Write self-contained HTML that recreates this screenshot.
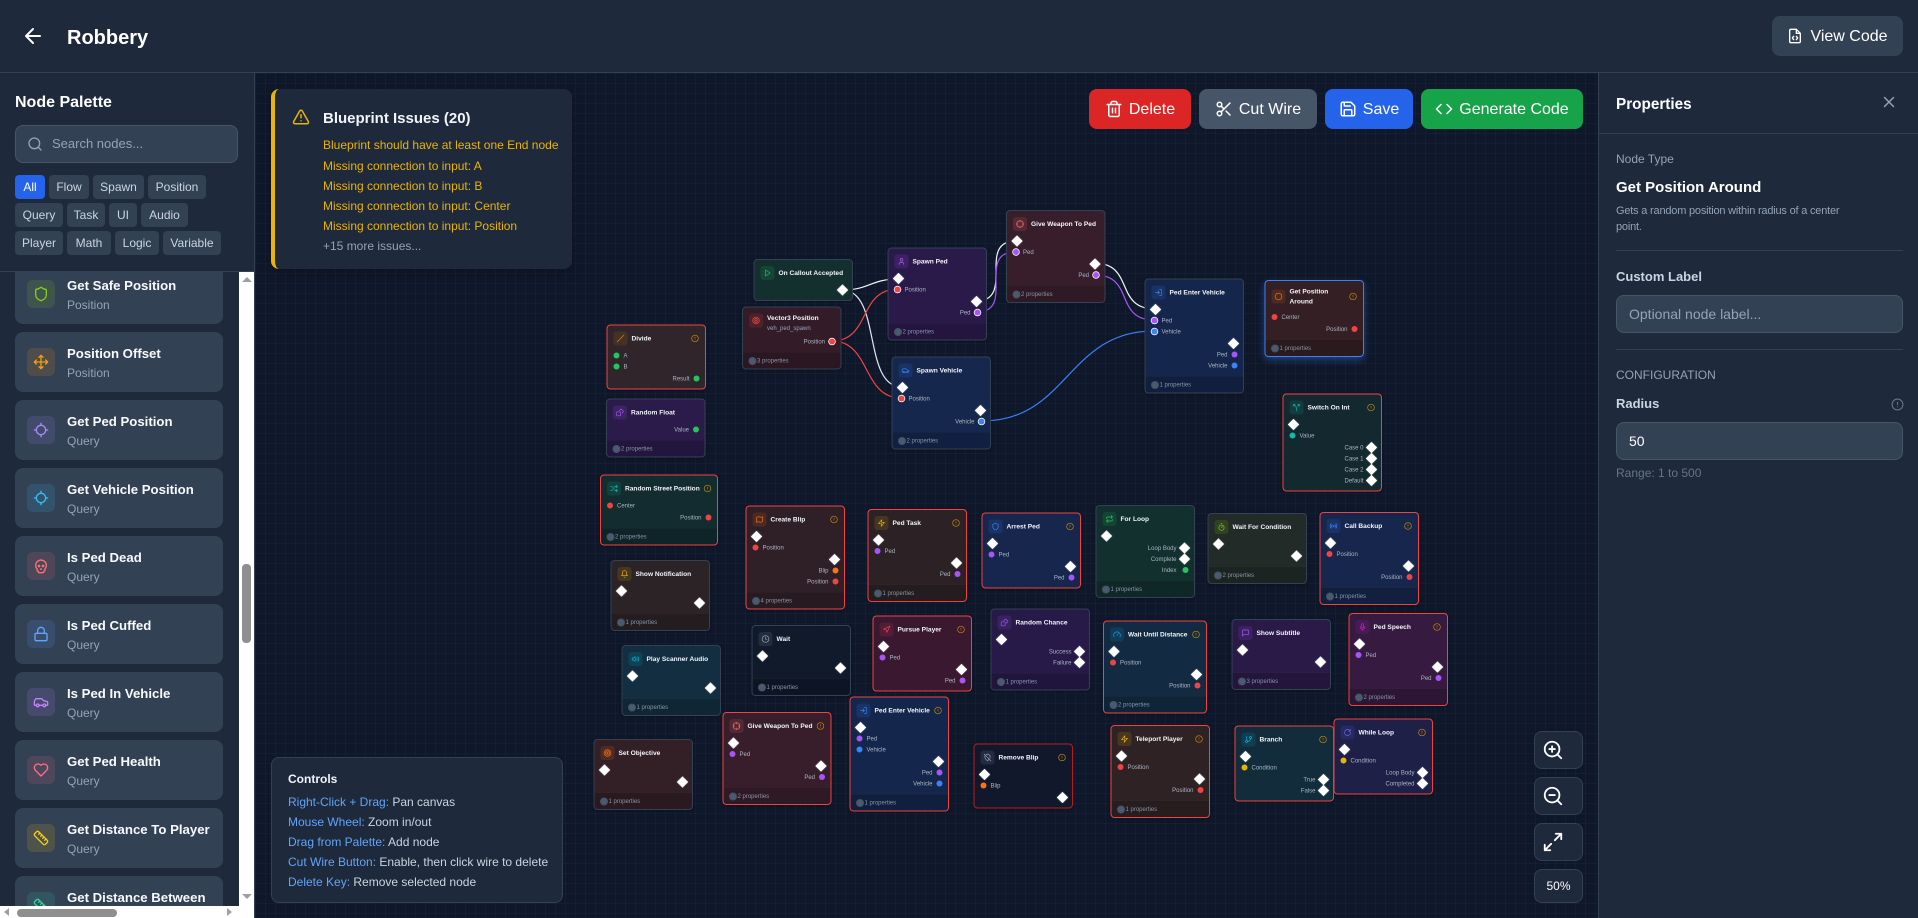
<!DOCTYPE html>
<html lang="en"><head><meta charset="utf-8"><title>Robbery</title>
<style>
*{box-sizing:border-box}
html,body{margin:0;padding:0;width:1918px;height:918px;overflow:hidden;background:#0f172a;font-family:"Liberation Sans",sans-serif;color:#fff}
p{margin:0}
svg.defs{position:absolute;width:0;height:0}
.ab{position:absolute}
svg.i{fill:none;stroke:currentColor;stroke-width:2;stroke-linecap:round;stroke-linejoin:round;display:block}
#hdr{left:0;top:0;width:1918px;height:73px;background:#1e293b;border-bottom:1px solid #334155}
#canvas{left:255px;top:73px;width:1344px;height:845px;background-color:#0f172a;background-image:linear-gradient(rgba(51,65,85,.15) 1px,transparent 1px),linear-gradient(90deg,rgba(51,65,85,.15) 1px,transparent 1px);background-size:10px 10px}
#wires{left:0;top:0}
#layer{left:0;top:0;width:3836px;height:1836px;transform:scale(.5);transform-origin:0 0}
.n{position:absolute;width:199px;border:2px solid #334155;border-radius:8px;background:var(--c);font-size:12px;color:#aab4c3;box-shadow:0 2px 6px rgba(0,0,0,.25)}
.n.e{border-color:#ef4444}
.n.nf{padding-bottom:9px}
.h{display:flex;height:49px;padding:12px 12px 0;gap:8px}
.h b{font-size:13.2px;line-height:28px;color:#f1f5f9;white-space:nowrap}
.ic{position:relative;display:flex;align-items:center;justify-content:center;flex:none;width:28px;height:28px;color:var(--k);font-style:normal}
.ic:before{content:"";position:absolute;left:0;top:0;right:0;bottom:0;background:currentColor;opacity:.14;border-radius:6px}
.ic svg{position:relative;width:16px;height:16px}
.w{width:16px;height:16px;margin:6px 0 0 auto;color:#ca8a04;flex:none}
.r{position:relative;height:22px;line-height:22px;padding-left:32px;white-space:nowrap}
.o{text-align:right;padding:0 31px 0 0}
.o.X{padding-right:35px}
.r:not(.o)+.o{margin-top:2px}
.r u{position:absolute;text-decoration:none}
.x{left:12px;top:3px;width:16px;height:16px;background:#fff;transform:rotate(45deg);box-shadow:0 0 3px rgba(255,255,255,.45)}
.o .x{left:auto;right:11px}
.d{left:12px;top:5px;width:12px;height:12px;border-radius:50%;background:var(--p)}
.o .d{left:auto;right:11px}
.c{box-shadow:0 0 0 1.500px #fff}
.R{--p:#ef4444}.P{--p:#a855f7}.B{--p:#3b82f6}.G{--p:#22c55e}.O{--p:#f97316}.Y{--p:#eab308}.T{--p:#14b8a6}
.f{position:relative;margin-top:9px;height:34px;line-height:33px;padding-left:28px;background:rgba(0,0,0,.16);border-top:2px solid rgba(255,255,255,.035);border-radius:0 0 6px 6px;color:#8693a6}
.f:before{content:"";position:absolute;left:11px;top:9px;width:12px;height:12px;border-radius:50%;background:#4b5a6e;border:2px dotted #3d4a5c}
#side{left:0;top:73px;width:255px;height:845px;background:#1e293b;border-right:1px solid #334155}
#side h2{position:absolute;left:15px;top:20px;margin:0;font-size:16px;line-height:20px;font-weight:bold}
#search{position:absolute;left:15px;top:52px;width:223px;height:38px;background:#334155;border:1px solid #475569;border-radius:8px;color:#94a3b8;font-size:13px;line-height:36px;padding-left:36px}
#search svg{position:absolute;left:11px;top:10px;width:16px;height:16px}
.chip{position:absolute;height:24px;line-height:24px;text-align:center;background:#334155;color:#cbd5e1;font-size:12px;border-radius:4px}
#secline{left:0;top:271px;width:254px;height:1px;background:#334155}
#list{left:0;top:272px;width:239px;height:634px;overflow:hidden;background:#1e293b}
.it{position:absolute;left:15px;width:208px;height:60px;background:#334155;border-radius:8px}
.it .ic{position:absolute;left:12px;top:16px}
.it b{position:absolute;left:52px;top:12px;font-size:13.2px;line-height:20px;color:#f8fafc;white-space:nowrap}
.it span{position:absolute;left:52px;top:33px;font-size:12px;line-height:16px;color:#94a3b8}
#vs{left:239px;top:272px;width:15px;height:646px;background:#fff}
#hs{left:0;top:906px;width:239px;height:12px;background:#fff}
.thumb{position:absolute;background:#8f8f8f;border-radius:4px}
.tri{position:absolute;width:0;height:0;border-style:solid;border-color:transparent}
.btn{position:absolute;top:89px;height:40px;padding-top:2px;border-radius:8px;display:flex;align-items:center;justify-content:center;gap:6px;font-size:16px;color:#fff}
.btn svg{width:18px;height:18px;margin-top:-2px}
#warn{left:271px;top:89px;width:301px;height:180px;background:#1e293b;border-left:4px solid #eab308;border-radius:8px;box-shadow:0 4px 12px rgba(0,0,0,.2)}
#warn b{position:absolute;left:48px;top:19px;font-size:15px;line-height:22px;color:#f1f5f9}
#warn svg{position:absolute;left:17px;top:19px;width:18px;height:18px;color:#eab308}
#warn p{position:absolute;left:48px;font-size:12px;line-height:20px;color:#eab308;white-space:nowrap}
#ctl{left:271px;top:757px;width:292px;height:146px;background:#1e293b;border:1px solid #334155;border-radius:8px;font-size:12px;color:#cbd5e1}
#ctl b{position:absolute;left:16px;top:13px;line-height:16px;color:#f1f5f9}
#ctl p{position:absolute;left:16px;line-height:20px;white-space:nowrap}
#ctl em{font-style:normal;color:#60a5fa}
.zb{position:absolute;left:1534px;width:49px;height:38px;background:#1e293b;border:1px solid #334155;border-radius:8px;display:flex;align-items:center;justify-content:center;color:#fff;font-size:12px}
.zb svg{width:22px;height:22px;margin-right:12px}
#props{left:1598px;top:73px;width:320px;height:845px;background:#1e293b;border-left:1px solid #334155}
#props div,#props p{position:absolute}
.ln{left:17px;width:287px;height:1px;background:#334155}
.inp{left:17px;width:287px;height:38px;background:#334155;border:1px solid #475569;border-radius:8px;font-size:14px;line-height:36px;padding-left:12px}
.lb{left:17px;font-size:13px;line-height:18px;font-weight:bold;color:#cbd5e1}
.sm{left:17px;font-size:12px;line-height:16px;color:#94a3b8}
</style></head><body>
<svg class="defs" xmlns="http://www.w3.org/2000/svg"><defs>
<symbol id="alert" viewBox="0 0 24 24"><circle cx="12" cy="12" r="10"/><path d="M12 8v4M12 16h.01"/></symbol>
<symbol id="play" viewBox="0 0 24 24"><path d="M6 3l14 9-14 9z"/></symbol>
<symbol id="target" viewBox="0 0 24 24"><circle cx="12" cy="12" r="10"/><circle cx="12" cy="12" r="6"/><circle cx="12" cy="12" r="2"/></symbol>
<symbol id="user" viewBox="0 0 24 24"><path d="M19 21v-2a4 4 0 0 0-4-4H9a4 4 0 0 0-4 4v2"/><circle cx="12" cy="7" r="4"/></symbol>
<symbol id="car" viewBox="0 0 24 24"><path d="M19 17h2c.6 0 1-.4 1-1v-3c0-.9-.7-1.7-1.5-1.9C18.7 10.6 16 10 16 10s-1.3-1.4-2.2-2.3c-.5-.4-1.1-.7-1.8-.7H5c-.6 0-1.1.4-1.4.9l-1.4 2.9A3.7 3.7 0 0 0 2 12v4c0 .6.4 1 1 1h2"/><circle cx="7" cy="17" r="2"/><path d="M9 17h6"/><circle cx="17" cy="17" r="2"/></symbol>
<symbol id="cross" viewBox="0 0 24 24"><circle cx="12" cy="12" r="10"/><path d="M22 12h-4M6 12H2M12 6V2M12 22v-4"/></symbol>
<symbol id="login" viewBox="0 0 24 24"><path d="M15 3h4a2 2 0 0 1 2 2v14a2 2 0 0 1-2 2h-4M10 17l5-5-5-5M15 12H3"/></symbol>
<symbol id="circle" viewBox="0 0 24 24"><circle cx="12" cy="12" r="10"/></symbol>
<symbol id="slash" viewBox="0 0 24 24"><path d="M22 2 2 22"/></symbol>
<symbol id="dice" viewBox="0 0 24 24"><rect x="2" y="10" width="12" height="12" rx="2"/><path d="M17.9 14l3.5-3.5a2.2 2.2 0 0 0 0-3l-5-4.9a2.2 2.2 0 0 0-3 0L10 6"/></symbol>
<symbol id="split" viewBox="0 0 24 24"><path d="M16 3h5v5M8 3H3v5M12 22v-8.3a4 4 0 0 0-1.2-2.9L3 3M15 9l6-6"/></symbol>
<symbol id="shuffle" viewBox="0 0 24 24"><path d="M18 14l4 4-4 4M18 2l4 4-4 4M2 18h2a4 4 0 0 0 3.3-1.7l5.4-8.6A4 4 0 0 1 16 6h6M2 6h2a4 4 0 0 1 3.6 2.2M22 18h-6a4 4 0 0 1-3.3-1.8l-.4-.4"/></symbol>
<symbol id="map" viewBox="0 0 24 24"><path d="M14.1 5.6a2 2 0 0 0 1.8 0l3.7-1.9A1 1 0 0 1 21 4.6v12.8a1 1 0 0 1-.6.9l-4.5 2.3a2 2 0 0 1-1.8 0l-4.2-2.1a2 2 0 0 0-1.8 0l-3.7 1.8A1 1 0 0 1 3 19.4V6.6a1 1 0 0 1 .6-.9l4.5-2.3a2 2 0 0 1 1.8 0z"/></symbol>
<symbol id="zap" viewBox="0 0 24 24"><path d="M13 2 3 14h9l-1 8 10-12h-9l1-8z"/></symbol>
<symbol id="bell" viewBox="0 0 24 24"><path d="M6 8a6 6 0 0 1 12 0c0 7 3 9 3 9H3s3-2 3-9M10.3 21a1.9 1.9 0 0 0 3.4 0"/></symbol>
<symbol id="clock" viewBox="0 0 24 24"><circle cx="12" cy="12" r="10"/><path d="M12 6v6l4 2"/></symbol>
<symbol id="nav" viewBox="0 0 24 24"><path d="M3 11 22 2 13 21 11 13z"/></symbol>
<symbol id="vol" viewBox="0 0 24 24"><path d="M11 5 6 9H2v6h4l5 4zM15.5 8.5a5 5 0 0 1 0 7M19 5a10 10 0 0 1 0 14"/></symbol>
<symbol id="shield" viewBox="0 0 24 24"><path d="M20 13c0 5-3.5 7.5-7.7 9a1 1 0 0 1-.6 0C7.5 20.5 4 18 4 13V6a1 1 0 0 1 1-1c2 0 4.5-1.2 6.2-2.7a1.2 1.2 0 0 1 1.6 0C14.5 3.8 17 5 19 5a1 1 0 0 1 1 1z"/></symbol>
<symbol id="repeat" viewBox="0 0 24 24"><path d="M17 2l4 4-4 4M3 11v-1a4 4 0 0 1 4-4h14M7 22l-4-4 4-4M21 13v1a4 4 0 0 1-4 4H3"/></symbol>
<symbol id="timer" viewBox="0 0 24 24"><path d="M10 2h4M12 14l3-3"/><circle cx="12" cy="14" r="8"/></symbol>
<symbol id="radio" viewBox="0 0 24 24"><path d="M4.9 19.1C1 15.2 1 8.8 4.9 4.9M7.8 16.2c-2.3-2.3-2.3-6.1 0-8.5M16.2 7.8c2.3 2.3 2.3 6.1 0 8.5M19.1 4.9C23 8.8 23 15.1 19.1 19"/><circle cx="12" cy="12" r="2"/></symbol>
<symbol id="gauge" viewBox="0 0 24 24"><path d="M12 14l4-4M3.3 19a10 10 0 1 1 17.4 0"/></symbol>
<symbol id="msg" viewBox="0 0 24 24"><path d="M21 15a2 2 0 0 1-2 2H7l-4 4V5a2 2 0 0 1 2-2h14a2 2 0 0 1 2 2z"/></symbol>
<symbol id="mic" viewBox="0 0 24 24"><path d="M12 2a3 3 0 0 0-3 3v7a3 3 0 0 0 6 0V5a3 3 0 0 0-3-3zM19 10v2a7 7 0 0 1-14 0v-2M12 19v3"/></symbol>
<symbol id="branch" viewBox="0 0 24 24"><path d="M6 3v12M18 9a9 9 0 0 1-9 9"/><circle cx="18" cy="6" r="3"/><circle cx="6" cy="18" r="3"/></symbol>
<symbol id="rot" viewBox="0 0 24 24"><path d="M21 12a9 9 0 1 1-9-9c2.5 0 4.9 1 6.7 2.7L21 8M21 3v5h-5"/></symbol>
<symbol id="pinoff" viewBox="0 0 24 24"><path d="M5.4 5.4A8 8 0 0 0 4 10c0 6 8 12 8 12a30 30 0 0 0 5-5M19 14a8 8 0 0 0 1-4 8 8 0 0 0-12-6.9M2 2l20 20"/></symbol>
<symbol id="move" viewBox="0 0 24 24"><path d="M12 2v20M15 19l-3 3-3-3M19 9l3 3-3 3M2 12h20M5 9l-3 3 3 3M9 5l3-3 3 3"/></symbol>
<symbol id="locate" viewBox="0 0 24 24"><path d="M2 12h3M19 12h3M12 2v3M12 19v3"/><circle cx="12" cy="12" r="7"/></symbol>
<symbol id="skull" viewBox="0 0 24 24"><path d="M12.5 17l-.5-1-.5 1zM15 22a1 1 0 0 0 1-1v-1a2 2 0 0 0 1.6-3.2 8 8 0 1 0-11.2 0A2 2 0 0 0 8 20v1a1 1 0 0 0 1 1z"/><circle cx="15" cy="12" r="1"/><circle cx="9" cy="12" r="1"/></symbol>
<symbol id="lock" viewBox="0 0 24 24"><rect x="3" y="11" width="18" height="11" rx="2"/><path d="M7 11V7a5 5 0 0 1 10 0v4"/></symbol>
<symbol id="heart" viewBox="0 0 24 24"><path d="M19 14c1.5-1.5 3-3.2 3-5.500A5.500 5.500 0 0 0 16.500 3c-1.800 0-3 .5-4.500 2-1.500-1.500-2.700-2-4.500-2A5.500 5.500 0 0 0 2 8.500c0 2.300 1.500 4 3 5.500l7 7z"/></symbol>
<symbol id="ruler" viewBox="0 0 24 24"><path d="M21.300 15.300a2.400 2.400 0 0 1 0 3.400l-2.600 2.600a2.400 2.400 0 0 1-3.400 0L2.700 8.700a2.400 2.400 0 0 1 0-3.400l2.600-2.600a2.400 2.400 0 0 1 3.400 0zM14.500 12.500l2-2M11.500 9.500l2-2M8.500 6.500l2-2M17.500 15.500l2-2"/></symbol>
</defs></svg>

<div id="canvas" class="ab"></div>

<svg id="wires" class="ab" width="1918" height="918" fill="none" stroke-width="1.200" stroke-linecap="round">
<path stroke="#f1f5f9" d="M842 290C870 290 870 279 899 279"/>
<path stroke="#e2e8f0" d="M842 290C882 290 862 387 902 387"/>
<path stroke="#ef4444" d="M832 341C871 341 858 289 898 289"/>
<path stroke="#ef4444" d="M832 341C871 341 862 398 901 398"/>
<path stroke="#f1f5f9" d="M976 301C1016 301 976 241 1016 241"/>
<path stroke="#a855f7" d="M977 312C1016 312 976 252 1015 252"/>
<path stroke="#f1f5f9" d="M1094 263C1135 263 1114 309 1155 309"/>
<path stroke="#a855f7" d="M1095 275C1135 275 1114 320 1154 320"/>
<path stroke="#3b82f6" d="M982 421C1068 421 1067 331 1154 331"/>
</svg>

<div id="layer" class="ab">
<div class="n nf" style="left:1507px;top:518px;--c:#13302f;--k:#22c55e"><div class="h"><i class="ic"><svg class="i"><use href="#play"/></svg></i><b>On Callout Accepted</b></div><p class="r o"><u class="x"></u></p></div>

<div class="n" style="left:1484px;top:613px;--c:#331c28;--k:#ef4444"><div class="h" style="height:57px"><i class="ic"><svg class="i"><use href="#target"/></svg></i><b style="line-height:18px">Vector3 Position<span style="display:block;margin-top:2px;font-size:12px;font-weight:normal;color:#94a3b8">veh_ped_spawn</span></b></div><p class="r o">Position<u class="d R c"></u></p><div class="f">3 properties</div></div>

<div class="n" style="left:1775px;top:495px;--c:#2a1a4a;--k:#a855f7"><div class="h"><i class="ic"><svg class="i"><use href="#user"/></svg></i><b>Spawn Ped</b></div><p class="r"><u class="x"></u></p><p class="r"><u class="d R c"></u>Position</p><p class="r o"><u class="x"></u></p><p class="r o">Ped<u class="d P c"></u></p><div class="f">2 properties</div></div>

<div class="n" style="left:1783px;top:713px;--c:#15274d;--k:#3b82f6"><div class="h"><i class="ic"><svg class="i"><use href="#car"/></svg></i><b>Spawn Vehicle</b></div><p class="r"><u class="x"></u></p><p class="r"><u class="d R c"></u>Position</p><p class="r o"><u class="x"></u></p><p class="r o">Vehicle<u class="d B c"></u></p><div class="f">2 properties</div></div>

<div class="n e nf" style="left:1213px;top:649px;--c:#30252a;--k:#ca8a04"><div class="h"><i class="ic"><svg class="i"><use href="#slash"/></svg></i><b>Divide</b><svg class="i w"><use href="#alert"/></svg></div><p class="r"><u class="d G"></u>A</p><p class="r"><u class="d G"></u>B</p><p class="r o">Result<u class="d G"></u></p></div>

<div class="n" style="left:1212px;top:797px;--c:#2a1b4a;--k:#a855f7"><div class="h"><i class="ic"><svg class="i"><use href="#dice"/></svg></i><b>Random Float</b></div><p class="r o">Value<u class="d G"></u></p><div class="f">2 properties</div></div>

<div class="n" style="left:2012px;top:420px;--c:#381e2b;--k:#f87171"><div class="h"><i class="ic"><svg class="i"><use href="#cross"/></svg></i><b>Give Weapon To Ped</b></div><p class="r"><u class="x"></u></p><p class="r"><u class="d P c"></u>Ped</p><p class="r o"><u class="x"></u></p><p class="r o">Ped<u class="d P c"></u></p><div class="f">2 properties</div></div>

<div class="n" style="left:2289px;top:557px;--c:#15264c;--k:#3b82f6"><div class="h"><i class="ic"><svg class="i"><use href="#login"/></svg></i><b>Ped Enter Vehicle</b></div><p class="r"><u class="x"></u></p><p class="r"><u class="d P c"></u>Ped</p><p class="r"><u class="d B c"></u>Vehicle</p><p class="r o"><u class="x"></u></p><p class="r o">Ped<u class="d P"></u></p><p class="r o">Vehicle<u class="d B"></u></p><div class="f">1 properties</div></div>

<div class="n" style="left:2529px;top:560px;--c:#331f24;--k:#f97316;border-color:#3b82f6;box-shadow:0 6px 16px rgba(59,130,246,.4)"><div class="h" style="height:61px"><i class="ic" style="margin-top:5px"><svg class="i"><use href="#circle"/></svg></i><b style="line-height:20px;margin-top:-1px">Get Position<br>Around</b><svg class="i w" style="margin-top:11px"><use href="#alert"/></svg></div><p class="r"><u class="d R"></u>Center</p><p class="r o">Position<u class="d R"></u></p><div class="f">1 properties</div></div>

<div class="n e nf" style="left:2565px;top:787px;--c:#13282f;--k:#14b8a6"><div class="h"><i class="ic"><svg class="i"><use href="#split"/></svg></i><b>Switch On Int</b><svg class="i w"><use href="#alert"/></svg></div><p class="r"><u class="x"></u></p><p class="r"><u class="d T"></u>Value</p><p class="r o X"><u class="x"></u>Case 0</p><p class="r o X"><u class="x"></u>Case 1</p><p class="r o X"><u class="x"></u>Case 2</p><p class="r o X"><u class="x"></u>Default</p></div>

<div class="n e" style="left:1200px;top:949px;width:236px;--c:#122c30;--k:#14b8a6"><div class="h"><i class="ic"><svg class="i"><use href="#shuffle"/></svg></i><b>Random Street Position</b><svg class="i w"><use href="#alert"/></svg></div><p class="r"><u class="d R"></u>Center</p><p class="r o">Position<u class="d R"></u></p><div class="f">2 properties</div></div>

<div class="n e" style="left:1491px;top:1011px;--c:#2f1f27;--k:#f97316"><div class="h"><i class="ic"><svg class="i"><use href="#map"/></svg></i><b>Create Blip</b><svg class="i w"><use href="#alert"/></svg></div><p class="r"><u class="x"></u></p><p class="r"><u class="d R"></u>Position</p><p class="r o"><u class="x"></u></p><p class="r o">Blip<u class="d O"></u></p><p class="r o">Position<u class="d R"></u></p><div class="f">4 properties</div></div>

<div class="n e" style="left:1735px;top:1018px;--c:#2c2226;--k:#eab308"><div class="h"><i class="ic"><svg class="i"><use href="#zap"/></svg></i><b>Ped Task</b><svg class="i w"><use href="#alert"/></svg></div><p class="r"><u class="x"></u></p><p class="r"><u class="d P"></u>Ped</p><p class="r o"><u class="x"></u></p><p class="r o">Ped<u class="d P"></u></p><div class="f">1 properties</div></div>

<div class="n e nf" style="left:1963px;top:1025px;--c:#16264d;--k:#3b82f6"><div class="h"><i class="ic"><svg class="i"><use href="#shield"/></svg></i><b>Arrest Ped</b><svg class="i w"><use href="#alert"/></svg></div><p class="r"><u class="x"></u></p><p class="r"><u class="d P"></u>Ped</p><p class="r o"><u class="x"></u></p><p class="r o">Ped<u class="d P"></u></p></div>

<div class="n" style="left:1221px;top:1120px;--c:#2c2326;--k:#eab308"><div class="h"><i class="ic"><svg class="i"><use href="#bell"/></svg></i><b>Show Notification</b></div><p class="r"><u class="x"></u></p><p class="r o"><u class="x"></u></p><div class="f">1 properties</div></div>

<div class="n" style="left:1503px;top:1250px;--c:#101a2b;--k:#94a3b8"><div class="h"><i class="ic"><svg class="i"><use href="#clock"/></svg></i><b>Wait</b></div><p class="r"><u class="x"></u></p><p class="r o"><u class="x"></u></p><div class="f">1 properties</div></div>

<div class="n e nf" style="left:1745px;top:1231px;--c:#3a1830;--k:#f43f5e"><div class="h"><i class="ic"><svg class="i"><use href="#nav"/></svg></i><b>Pursue Player</b><svg class="i w"><use href="#alert"/></svg></div><p class="r"><u class="x"></u></p><p class="r"><u class="d P"></u>Ped</p><p class="r o"><u class="x"></u></p><p class="r o">Ped<u class="d P"></u></p></div>

<div class="n" style="left:1981px;top:1217px;--c:#271a48;--k:#a855f7"><div class="h"><i class="ic"><svg class="i"><use href="#dice"/></svg></i><b>Random Chance</b></div><p class="r"><u class="x"></u></p><p class="r o X"><u class="x"></u>Success</p><p class="r o X"><u class="x"></u>Failure</p><div class="f">1 properties</div></div>

<div class="n" style="left:1243px;top:1290px;--c:#122e40;--k:#06b6d4"><div class="h"><i class="ic"><svg class="i"><use href="#vol"/></svg></i><b>Play Scanner Audio</b></div><p class="r"><u class="x"></u></p><p class="r o"><u class="x"></u></p><div class="f">1 properties</div></div>

<div class="n e" style="left:1699px;top:1393px;--c:#15264c;--k:#3b82f6"><div class="h"><i class="ic"><svg class="i"><use href="#login"/></svg></i><b>Ped Enter Vehicle</b><svg class="i w"><use href="#alert"/></svg></div><p class="r"><u class="x"></u></p><p class="r"><u class="d P"></u>Ped</p><p class="r"><u class="d B"></u>Vehicle</p><p class="r o"><u class="x"></u></p><p class="r o">Ped<u class="d P"></u></p><p class="r o">Vehicle<u class="d B"></u></p><div class="f">1 properties</div></div>

<div class="n" style="left:2191px;top:1010px;--c:#12302e;--k:#22c55e"><div class="h"><i class="ic"><svg class="i"><use href="#repeat"/></svg></i><b>For Loop</b></div><p class="r"><u class="x"></u></p><p class="r o X"><u class="x"></u>Loop Body</p><p class="r o X"><u class="x"></u>Complete</p><p class="r o X">Index<u class="d G" style="right:11px"></u></p><div class="f">1 properties</div></div>

<div class="n" style="left:2415px;top:1026px;--c:#222b28;--k:#84cc16"><div class="h"><i class="ic"><svg class="i"><use href="#timer"/></svg></i><b>Wait For Condition</b></div><p class="r"><u class="x"></u></p><p class="r o"><u class="x"></u></p><div class="f">2 properties</div></div>

<div class="n e" style="left:2639px;top:1024px;--c:#16264c;--k:#3b82f6"><div class="h"><i class="ic"><svg class="i"><use href="#radio"/></svg></i><b>Call Backup</b><svg class="i w"><use href="#alert"/></svg></div><p class="r"><u class="x"></u></p><p class="r"><u class="d R"></u>Position</p><p class="r o"><u class="x"></u></p><p class="r o">Position<u class="d R"></u></p><div class="f">1 properties</div></div>

<div class="n e" style="left:2206px;top:1241px;width:208px;--c:#122b42;--k:#0ea5e9"><div class="h"><i class="ic"><svg class="i"><use href="#gauge"/></svg></i><b>Wait Until Distance</b><svg class="i w"><use href="#alert"/></svg></div><p class="r"><u class="x"></u></p><p class="r"><u class="d R"></u>Position</p><p class="r o"><u class="x"></u></p><p class="r o">Position<u class="d R"></u></p><div class="f">2 properties</div></div>

<div class="n" style="left:2463px;top:1238px;--c:#2a1a48;--k:#a855f7"><div class="h"><i class="ic"><svg class="i"><use href="#msg"/></svg></i><b>Show Subtitle</b></div><p class="r"><u class="x"></u></p><p class="r o"><u class="x"></u></p><div class="f">3 properties</div></div>

<div class="n e" style="left:2697px;top:1226px;--c:#361a40;--k:#c026d3"><div class="h"><i class="ic"><svg class="i"><use href="#mic"/></svg></i><b>Ped Speech</b><svg class="i w"><use href="#alert"/></svg></div><p class="r"><u class="x"></u></p><p class="r"><u class="d P"></u>Ped</p><p class="r o"><u class="x"></u></p><p class="r o">Ped<u class="d P"></u></p><div class="f">2 properties</div></div>

<div class="n" style="left:1187px;top:1478px;--c:#332027;--k:#f97316"><div class="h"><i class="ic"><svg class="i"><use href="#target"/></svg></i><b>Set Objective</b></div><p class="r"><u class="x"></u></p><p class="r o"><u class="x"></u></p><div class="f">1 properties</div></div>

<div class="n e" style="left:1445px;top:1424px;width:218px;--c:#381e2b;--k:#f87171"><div class="h"><i class="ic"><svg class="i"><use href="#cross"/></svg></i><b>Give Weapon To Ped</b><svg class="i w"><use href="#alert"/></svg></div><p class="r"><u class="x"></u></p><p class="r"><u class="d P"></u>Ped</p><p class="r o"><u class="x"></u></p><p class="r o">Ped<u class="d P"></u></p><div class="f">2 properties</div></div>

<div class="n e nf" style="left:1947px;top:1487px;border-color:#b91c1c;--c:#12182c;--k:#94a3b8"><div class="h"><i class="ic"><svg class="i"><use href="#pinoff"/></svg></i><b>Remove Blip</b><svg class="i w"><use href="#alert"/></svg></div><p class="r"><u class="x"></u></p><p class="r"><u class="d O"></u>Blip</p><p class="r o"><u class="x"></u></p></div>

<div class="n e" style="left:2221px;top:1450px;--c:#2f2224;--k:#eab308"><div class="h"><i class="ic"><svg class="i"><use href="#zap"/></svg></i><b>Teleport Player</b><svg class="i w"><use href="#alert"/></svg></div><p class="r"><u class="x"></u></p><p class="r"><u class="d R"></u>Position</p><p class="r o"><u class="x"></u></p><p class="r o">Position<u class="d R"></u></p><div class="f">1 properties</div></div>

<div class="n e nf" style="left:2469px;top:1451px;--c:#122c3c;--k:#06b6d4"><div class="h"><i class="ic"><svg class="i"><use href="#branch"/></svg></i><b>Branch</b><svg class="i w"><use href="#alert"/></svg></div><p class="r"><u class="x"></u></p><p class="r"><u class="d Y"></u>Condition</p><p class="r o X"><u class="x"></u>True</p><p class="r o X"><u class="x"></u>False</p></div>

<div class="n e nf" style="left:2667px;top:1437px;--c:#1e2048;--k:#6366f1"><div class="h"><i class="ic"><svg class="i"><use href="#rot"/></svg></i><b>While Loop</b><svg class="i w"><use href="#alert"/></svg></div><p class="r"><u class="x"></u></p><p class="r"><u class="d Y"></u>Condition</p><p class="r o X"><u class="x"></u>Loop Body</p><p class="r o X"><u class="x"></u>Completed</p></div>
</div>

<div id="warn" class="ab"><svg class="i" viewBox="0 0 24 24"><path d="M21.730 18l-8-14a2 2 0 0 0-3.480 0l-8 14A2 2 0 0 0 4 21h16a2 2 0 0 0 1.730-3zM12 9v4M12 17h.01"/></svg><b>Blueprint Issues (20)</b>
<p style="top:46px">Blueprint should have at least one End node</p>
<p style="top:67px">Missing connection to input: A</p>
<p style="top:87px">Missing connection to input: B</p>
<p style="top:107px">Missing connection to input: Center</p>
<p style="top:127px">Missing connection to input: Position</p>
<p style="top:147px;color:#94a3b8">+15 more issues...</p></div>

<div id="ctl" class="ab"><b>Controls</b>
<p style="top:34px"><em>Right-Click + Drag:</em> Pan canvas</p>
<p style="top:54px"><em>Mouse Wheel:</em> Zoom in/out</p>
<p style="top:74px"><em>Drag from Palette:</em> Add node</p>
<p style="top:94px"><em>Cut Wire Button:</em> Enable, then click wire to delete</p>
<p style="top:114px"><em>Delete Key:</em> Remove selected node</p></div>

<div class="btn" style="left:1089px;width:102px;background:#dc2626"><svg class="i" viewBox="0 0 24 24"><path d="M3 6h18M19 6v14c0 1-1 2-2 2H7c-1 0-2-1-2-2V6M8 6V4c0-1 1-2 2-2h4c1 0 2 1 2 2v2M10 11v6M14 11v6"/></svg>Delete</div>
<div class="btn" style="left:1199px;width:118px;background:#475569"><svg class="i" viewBox="0 0 24 24"><circle cx="6" cy="6" r="3"/><path d="M8.100 8.100 12 12M20 4 8.100 15.900"/><circle cx="6" cy="18" r="3"/><path d="M14.800 14.800 20 20"/></svg>Cut Wire</div>
<div class="btn" style="left:1325px;width:88px;background:#2563eb"><svg class="i" viewBox="0 0 24 24"><path d="M15.200 3a2 2 0 0 1 1.400.6l3.800 3.800a2 2 0 0 1 .6 1.400V19a2 2 0 0 1-2 2H5a2 2 0 0 1-2-2V5a2 2 0 0 1 2-2zM17 21v-7a1 1 0 0 0-1-1H8a1 1 0 0 0-1 1v7M7 3v4a1 1 0 0 0 1 1h7"/></svg>Save</div>
<div class="btn" style="left:1421px;width:162px;background:#16a34a"><svg class="i" viewBox="0 0 24 24"><path d="M16 18l6-6-6-6M8 6l-6 6 6 6"/></svg>Generate Code</div>

<div class="zb" style="top:731px"><svg class="i" viewBox="0 0 24 24"><circle cx="11" cy="11" r="8"/><path d="M21 21l-4.300-4.300M11 8v6M8 11h6"/></svg></div>
<div class="zb" style="top:777px"><svg class="i" viewBox="0 0 24 24"><circle cx="11" cy="11" r="8"/><path d="M21 21l-4.300-4.300M8 11h6"/></svg></div>
<div class="zb" style="top:823px"><svg class="i" viewBox="0 0 24 24"><path d="M15 3h6v6M9 21H3v-6M21 3l-7 7M3 21l7-7"/></svg></div>
<div class="zb" style="top:869px;height:34px">50%</div>

<div id="hdr" class="ab">
<svg class="i ab" viewBox="0 0 24 24" style="left:21px;top:24px;width:24px;height:24px"><path d="M19 12H5M12 19l-7-7 7-7"/></svg>
<div class="ab" style="left:67px;top:26px;font-size:20px;line-height:24px;font-weight:bold">Robbery</div>
<div class="ab" style="left:1772px;top:16px;width:131px;height:40px;padding-top:2px;background:#334155;border-radius:8px;display:flex;align-items:center;justify-content:center;gap:7px;font-size:16px"><svg class="i" viewBox="0 0 24 24" style="width:16px;height:16px;margin-top:-2px"><path d="M14 2H6a2 2 0 0 0-2 2v16a2 2 0 0 0 2 2h12a2 2 0 0 0 2-2V8zM14 2v6h6M10 12.500 8 15l2 2.500M14 12.500l2 2.500-2 2.500"/></svg>View Code</div>
</div>

<div id="side" class="ab"><h2>Node Palette</h2>
<div id="search"><svg class="i" viewBox="0 0 24 24"><circle cx="11" cy="11" r="8"/><path d="M21 21l-4.300-4.300"/></svg>Search nodes...</div>
<span class="chip" style="left:15px;top:102px;width:30px;background:#2563eb;color:#fff">All</span>
<span class="chip" style="left:49px;top:102px;width:40px">Flow</span>
<span class="chip" style="left:93px;top:102px;width:51px">Spawn</span>
<span class="chip" style="left:148px;top:102px;width:58px">Position</span>
<span class="chip" style="left:15px;top:130px;width:48px">Query</span>
<span class="chip" style="left:67px;top:130px;width:38px">Task</span>
<span class="chip" style="left:109px;top:130px;width:28px">UI</span>
<span class="chip" style="left:141px;top:130px;width:47px">Audio</span>
<span class="chip" style="left:15px;top:158px;width:48px">Player</span>
<span class="chip" style="left:67px;top:158px;width:44px">Math</span>
<span class="chip" style="left:115px;top:158px;width:44px">Logic</span>
<span class="chip" style="left:163px;top:158px;width:58px">Variable</span>
</div>
<div id="secline" class="ab"></div>
<div id="list" class="ab">
<div class="it" style="top:-8px"><i class="ic" style="--k:#84cc16"><svg class="i"><use href="#shield"/></svg></i><b>Get Safe Position</b><span>Position</span></div>
<div class="it" style="top:60px"><i class="ic" style="--k:#f59e0b"><svg class="i"><use href="#move"/></svg></i><b>Position Offset</b><span>Position</span></div>
<div class="it" style="top:128px"><i class="ic" style="--k:#a78bfa"><svg class="i"><use href="#locate"/></svg></i><b>Get Ped Position</b><span>Query</span></div>
<div class="it" style="top:196px"><i class="ic" style="--k:#38bdf8"><svg class="i"><use href="#locate"/></svg></i><b>Get Vehicle Position</b><span>Query</span></div>
<div class="it" style="top:264px"><i class="ic" style="--k:#f87171"><svg class="i"><use href="#skull"/></svg></i><b>Is Ped Dead</b><span>Query</span></div>
<div class="it" style="top:332px"><i class="ic" style="--k:#60a5fa"><svg class="i"><use href="#lock"/></svg></i><b>Is Ped Cuffed</b><span>Query</span></div>
<div class="it" style="top:400px"><i class="ic" style="--k:#c084fc"><svg class="i"><use href="#car"/></svg></i><b>Is Ped In Vehicle</b><span>Query</span></div>
<div class="it" style="top:468px"><i class="ic" style="--k:#fb7185"><svg class="i"><use href="#heart"/></svg></i><b>Get Ped Health</b><span>Query</span></div>
<div class="it" style="top:536px"><i class="ic" style="--k:#facc15"><svg class="i"><use href="#ruler"/></svg></i><b>Get Distance To Player</b><span>Query</span></div>
<div class="it" style="top:604px"><i class="ic" style="--k:#34d399"><svg class="i"><use href="#ruler"/></svg></i><b>Get Distance Between</b><span>Query</span></div>
</div>
<div id="vs" class="ab"><div class="thumb" style="left:3px;top:292px;width:9px;height:79px"></div><div class="tri" style="left:3px;top:5px;border-width:0 5px 5px;border-bottom-color:#a0a0a0"></div><div class="tri" style="left:3px;top:622px;border-width:5px 5px 0;border-top-color:#a0a0a0"></div></div>
<div id="hs" class="ab"><div class="thumb" style="left:17px;top:3px;width:100px;height:8px"></div><div class="tri" style="left:4px;top:2px;border-width:4px 5px 4px 0;border-right-color:#a0a0a0"></div><div class="tri" style="left:227px;top:2px;border-width:4px 0 4px 5px;border-left-color:#a0a0a0"></div></div>

<div id="props" class="ab">
<p style="left:17px;top:22px;font-size:15.300px;line-height:20px;font-weight:bold">Properties</p>
<svg class="i ab" viewBox="0 0 24 24" style="left:281px;top:20px;width:18px;height:18px;color:#94a3b8"><path d="M18 6 6 18M6 6l12 12"/></svg>
<div class="ln" style="top:60px;left:0;width:319px"></div>
<p class="sm" style="top:78px">Node Type</p>
<p style="left:17px;top:105px;font-size:15px;line-height:20px;font-weight:bold">Get Position Around</p>
<p class="sm" style="top:130px;font-size:11px;letter-spacing:-.2px;white-space:nowrap">Gets a random position within radius of a center</p>
<p class="sm" style="top:146px;font-size:11px;letter-spacing:-.2px">point.</p>
<div class="ln" style="top:177px"></div>
<p class="lb" style="top:195px">Custom Label</p>
<div class="inp" style="top:222px;color:#94a3b8">Optional node label...</div>
<div class="ln" style="top:276px"></div>
<p class="sm" style="top:294px">CONFIGURATION</p>
<p class="lb" style="top:322px">Radius</p>
<svg class="i ab" viewBox="0 0 24 24" style="left:292px;top:325px;width:13px;height:13px;color:#64748b"><circle cx="12" cy="12" r="10"/><path d="M12 8v4M12 16h.01"/></svg>
<div class="inp" style="top:349px;color:#fff">50</div>
<p class="sm" style="top:392px;color:#64748b">Range: 1 to 500</p>
</div>
</body></html>
